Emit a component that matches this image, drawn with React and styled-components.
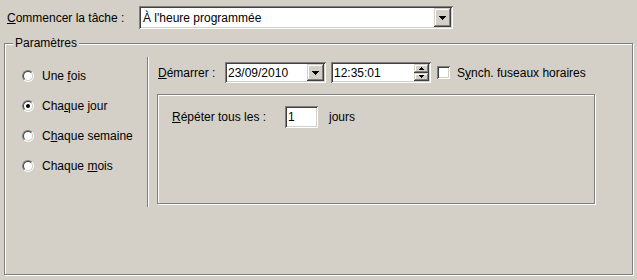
import React from 'react';
import styled, { createGlobalStyle } from 'styled-components';

const GlobalStyle = createGlobalStyle`
	html, body {
		margin: 0;
		padding: 0;
		background: #d4d0c8;
	}
	body {
		font-family: "Liberation Sans", Arial, sans-serif;
		font-size: 12px;
		color: #000;
	}
	* { box-sizing: border-box; }
`;

const sunken = `
	background: #fff;
	padding: 2px;
	box-shadow: inset 1px 1px #808080, inset -1px -1px #fff,
		inset 2px 2px #404040, inset -2px -2px #d4d0c8;
`;

const raised = `
	background: #d4d0c8;
	box-shadow: inset -1px -1px #404040, inset 1px 1px #d4d0c8,
		inset -2px -2px #808080, inset 2px 2px #fff;
`;

const Window = styled.div`
	width: 637px;
	height: 280px;
	overflow: hidden;
	display: flex;
	flex-direction: column;
`;

const TopRow = styled.div`
	display: flex;
	align-items: center;
	height: 23px;
	margin-top: 6px;
	padding-left: 7px;
`;

const FieldLabel = styled.span`
	width: ${p => p.$w}px;
	flex-shrink: 0;
	white-space: nowrap;
`;

const Combo = styled.div`
	${sunken}
	display: flex;
	align-items: stretch;
	width: ${p => p.$w}px;
	height: ${p => p.$h}px;
	margin-left: ${p => p.$ml || 0}px;
`;

const FieldText = styled.span`
	flex: 1;
	display: flex;
	align-items: center;
	padding-left: ${p => p.$pl || 1}px;
	white-space: nowrap;
`;

const DropButton = styled.span`
	${raised}
	width: 17px;
	display: flex;
	align-items: center;
	justify-content: center;
`;

const Spinner = styled.span`
	width: 15px;
	display: flex;
	flex-direction: column;
`;

const SpinButton = styled.span`
	${raised}
	flex: 1;
	display: flex;
	align-items: center;
	justify-content: center;
`;

const GroupBox = styled.div`
	position: relative;
	margin: 14px 4px 0 4px;
	height: 232px;
	border: 1px solid #808080;
	box-shadow: inset 1px 1px #fff, 1px 1px #fff;
	display: flex;
`;

const GroupTitle = styled.span`
	position: absolute;
	top: -8px;
	left: 8px;
	padding: 0 2px;
	line-height: 14px;
	background: #d4d0c8;
`;

const RadioColumn = styled.div`
	width: 142px;
	padding: 17px 0 0 17px;
	display: flex;
	flex-direction: column;
`;

const RadioRow = styled.label`
	display: flex;
	align-items: center;
	height: 30px;
	gap: 8px;
	white-space: nowrap;
`;

const RadioOuter = styled.span`
	width: 12px;
	height: 12px;
	border-radius: 50%;
	border: 1px solid;
	border-color: #808080 #fff #fff #808080;
	display: flex;
`;

const RadioInner = styled.span`
	width: 10px;
	height: 10px;
	border-radius: 50%;
	border: 1px solid;
	border-color: #404040 #d4d0c8 #d4d0c8 #404040;
	background: #fff;
	display: flex;
	align-items: center;
	justify-content: center;
`;

const RadioDot = styled.span`
	width: 4px;
	height: 4px;
	border-radius: 50%;
	background: #000;
`;

const Separator = styled.div`
	width: 2px;
	height: 150px;
	margin-top: 13px;
	border-left: 1px solid #808080;
	border-right: 1px solid #fff;
`;

const RightColumn = styled.div`
	flex: 1;
	padding-left: 9px;
	display: flex;
	flex-direction: column;
`;

const StartRow = styled.div`
	display: flex;
	align-items: center;
	height: 21px;
	margin-top: 18px;
`;

const CheckBox = styled.span`
	${sunken}
	width: 13px;
	height: 13px;
	margin-left: 6px;
	flex-shrink: 0;
`;

const CheckLabel = styled.span`
	margin-left: 7px;
	white-space: nowrap;
`;

const RepeatPanel = styled.div`
	width: 438px;
	height: 110px;
	margin: 11px 0 0 -1px;
	border: 1px solid #808080;
	box-shadow: inset 1px 1px #fff, 1px 1px #fff;
	padding: 11px 0 0 14px;
`;

const RepeatRow = styled.div`
	display: flex;
	align-items: center;
	height: 22px;
`;

const NumberInput = styled.span`
	${sunken}
	width: 33px;
	height: 22px;
	display: flex;
	align-items: center;
	padding-left: 3px;
`;

const Unit = styled.span`
	margin-left: 11px;
`;

const DownArrow = () => (
	<svg width="7" height="4" viewBox="0 0 7 4">
		<path d="M0 0h7v1h-1v1h-1v1h-1v1h-1v-1h-1v-1h-1v-1h-1z" fill="#000" />
	</svg>
);

const SmallArrow = ({ up }) => (
	<svg width="5" height="3" viewBox="0 0 5 3">
		<path
			d={up ? 'M2 0h1v1h1v1h1v1h-5v-1h1v-1h1z' : 'M0 0h5v1h-1v1h-1v1h-1v-1h-1v-1h-1z'}
			fill="#000"
		/>
	</svg>
);

const Radio = ({ checked, children }) => (
	<RadioRow>
		<RadioOuter>
			<RadioInner>{checked && <RadioDot />}</RadioInner>
		</RadioOuter>
		<span>{children}</span>
	</RadioRow>
);

export default function App() {
	return (
		<Window>
			<GlobalStyle />
			<TopRow>
				<FieldLabel $w={132}><u>C</u>ommencer la tâche :</FieldLabel>
				<Combo $w={314} $h={23}>
					<FieldText $pl={2}>À l'heure programmée</FieldText>
					<DropButton><DownArrow /></DropButton>
				</Combo>
			</TopRow>

			<GroupBox>
				<GroupTitle>Paramètres</GroupTitle>

				<RadioColumn>
					<Radio>Une <u>f</u>ois</Radio>
					<Radio checked>Cha<u>q</u>ue jour</Radio>
					<Radio>C<u>h</u>aque semaine</Radio>
					<Radio>Chaque <u>m</u>ois</Radio>
				</RadioColumn>

				<Separator />

				<RightColumn>
					<StartRow>
						<FieldLabel $w={67}><u>D</u>émarrer :</FieldLabel>
						<Combo $w={101} $h={21}>
							<FieldText>23/09/2010</FieldText>
							<DropButton><DownArrow /></DropButton>
						</Combo>
						<Combo $w={100} $h={21} $ml={5}>
							<FieldText>12:35:01</FieldText>
							<Spinner>
								<SpinButton><SmallArrow up /></SpinButton>
								<SpinButton><SmallArrow /></SpinButton>
							</Spinner>
						</Combo>
						<CheckBox />
						<CheckLabel>S<u>y</u>nch. fuseaux horaires</CheckLabel>
					</StartRow>

					<RepeatPanel>
						<RepeatRow>
							<FieldLabel $w={113}><u>R</u>épéter tous les :</FieldLabel>
							<NumberInput>1</NumberInput>
							<Unit>jours</Unit>
						</RepeatRow>
					</RepeatPanel>
				</RightColumn>
			</GroupBox>
		</Window>
	);
}
